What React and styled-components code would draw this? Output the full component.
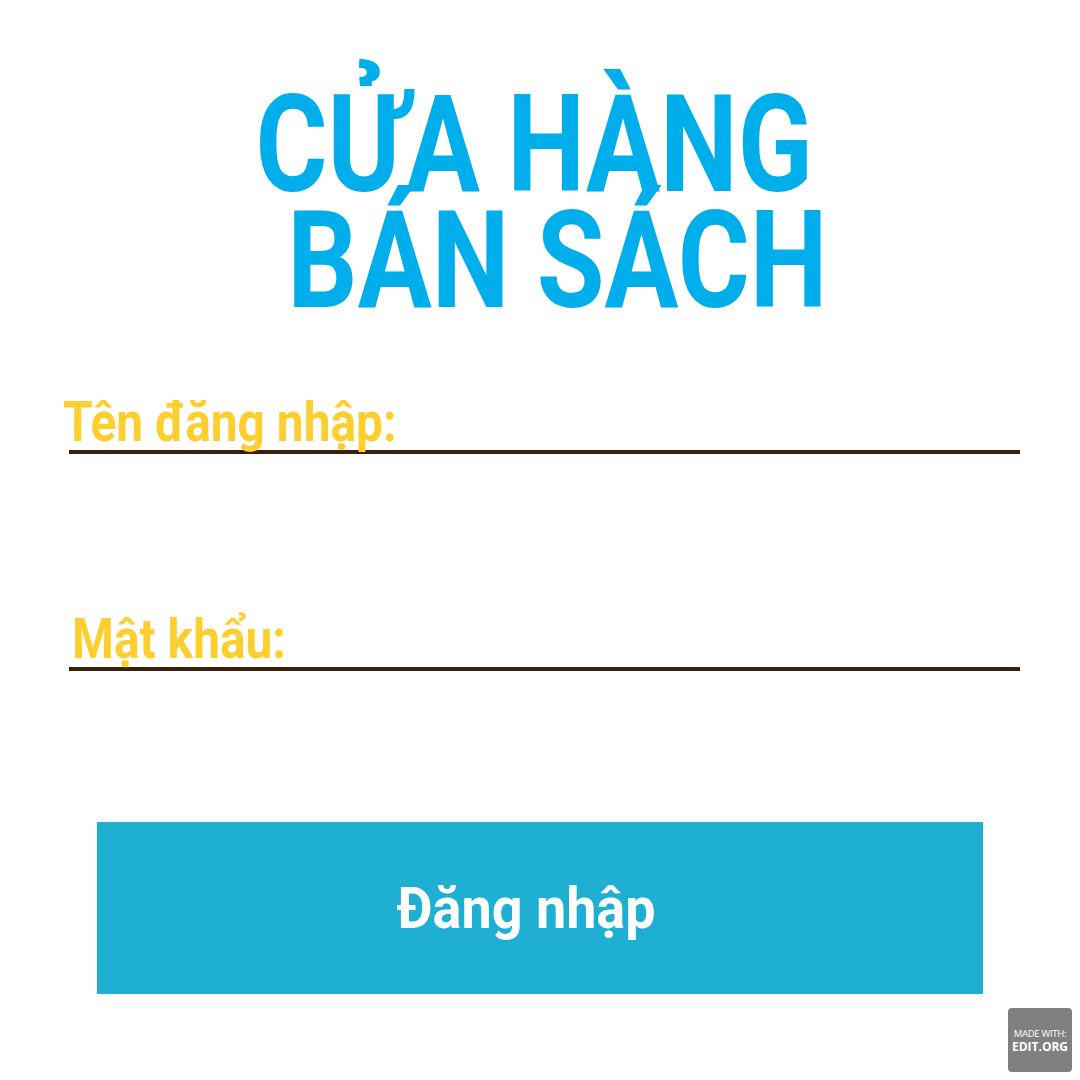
import React from 'react';
import styled, { createGlobalStyle } from 'styled-components';

const GlobalStyle = createGlobalStyle`
    html, body {
        margin: 0;
        padding: 0;
        background: #ffffff;
    }
`;

const Page = styled.div`
    position: relative;
    width: 1080px;
    height: 1080px;
    background: #ffffff;
    font-family: Roboto, "Liberation Sans", sans-serif;
    overflow: hidden;
    display: flex;
    flex-direction: column;
`;

const Title = styled.h1`
    margin: 87px 0 0;
    text-align: center;
    font-size: 136px;
    font-weight: 700;
    line-height: 116px;
    color: #00aeeb;
`;

const TitleLine = styled.span`
    display: inline-block;
    transform: translateX(${p => p.$shift}px) scaleX(${p => p.$scale});
    transform-origin: center center;
`;

const Form = styled.div`
    display: flex;
    flex-direction: column;
    padding: 0 60px 0 69px;
`;

const Field = styled.div`
    display: flex;
    flex-direction: column;
    margin-top: ${p => p.$top}px;
`;

const Label = styled.label`
    display: block;
    margin-left: ${p => p.$indent}px;
    font-size: 55px;
    font-weight: 700;
    line-height: 56px;
    color: #fdcf2e;
    transform: scaleX(0.87);
    transform-origin: left center;
    white-space: nowrap;
`;

const Underline = styled.div`
    height: 4px;
    background: #3a1f0a;
`;

const Button = styled.button`
    margin: 151px 97px 0;
    height: 172px;
    padding: 0 28px 0 0;
    border: none;
    background: #1eafd2;
    color: #ffffff;
    font-family: Roboto, "Liberation Sans", sans-serif;
    font-size: 58px;
    font-weight: 700;
    cursor: pointer;

    span {
        display: inline-block;
        transform: scaleX(0.93);
    }
`;

const Badge = styled.div`
    position: absolute;
    right: 8px;
    bottom: 8px;
    width: 64px;
    height: 64px;
    border-radius: 4px;
    background: #808080;
    color: #ffffff;
    display: flex;
    flex-direction: column;
    justify-content: center;
    align-items: center;
    font-family: "Open Sans", "DejaVu Sans", sans-serif;
`;

const BadgeSmall = styled.span`
    font-size: 9.5px;
    line-height: 13px;
    letter-spacing: -0.3px;
`;

const BadgeBig = styled.span`
    font-size: 12px;
    line-height: 14px;
    font-weight: 700;
`;

const App = () => (
    <Page>
        <GlobalStyle />
        <Title>
            <TitleLine $scale={0.81} $shift={-6}>CỬA HÀNG</TitleLine>
            <br />
            <TitleLine $scale={0.81} $shift={17}>BÁN SÁCH</TitleLine>
        </Title>
        <Form>
            <Field $top={75}>
                <Label $indent={-6}>Tên đăng nhập:</Label>
                <Underline />
            </Field>
            <Field $top={157}>
                <Label $indent={3}>Mật khẩu:</Label>
                <Underline />
            </Field>
        </Form>
        <Button>
            <span>Đăng nhập</span>
        </Button>
        <Badge>
            <BadgeSmall>MADE WITH:</BadgeSmall>
            <BadgeBig>EDIT.ORG</BadgeBig>
        </Badge>
    </Page>
);

export default App;
